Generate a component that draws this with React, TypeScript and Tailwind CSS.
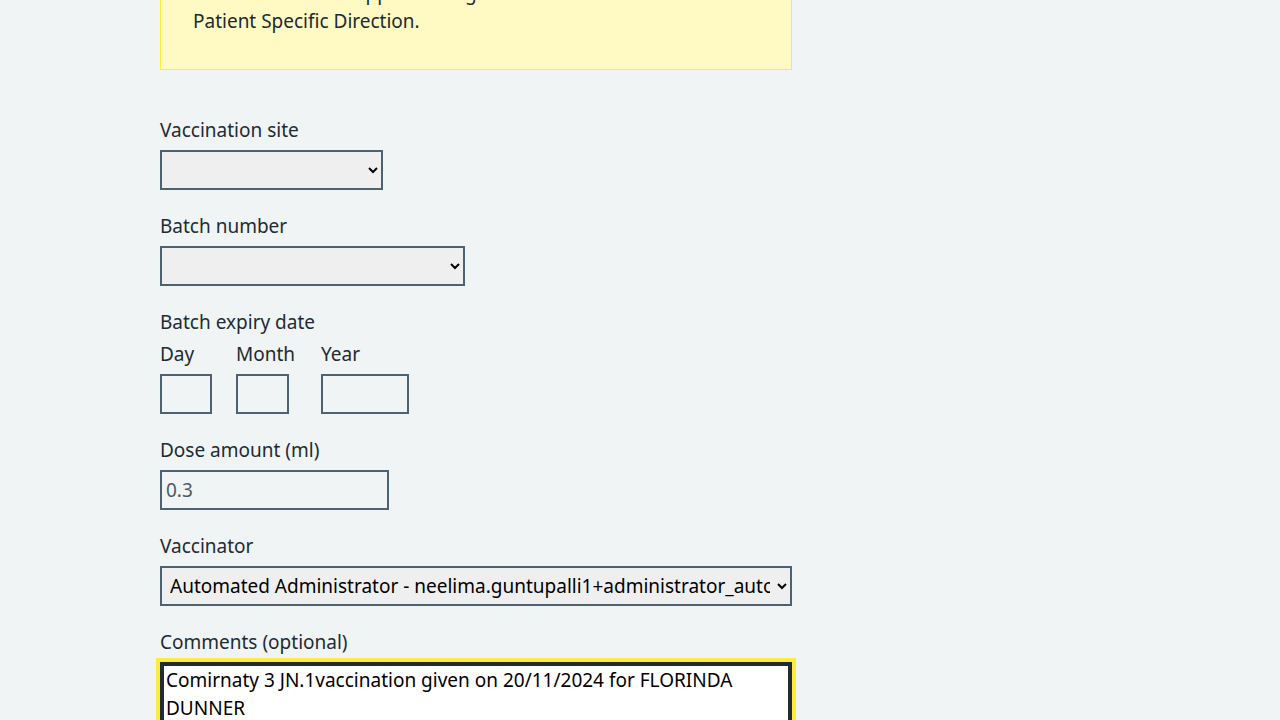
import { useState } from "react";

const font = { fontFamily: '"Noto Sans", "Open Sans", Arial, sans-serif' };

function Label({ children, htmlFor }: { children: React.ReactNode; htmlFor?: string }) {
  return (
    <label htmlFor={htmlFor} className="mb-[6px] block text-[19px] leading-[28px] text-[#212b32]">
      {children}
    </label>
  );
}

function DateField({ id, label, width, col }: { id: string; label: string; width: string; col?: string }) {
  return (
    <div className={`flex flex-col ${col ?? ""}`}>
      <label htmlFor={id} className="mb-[6px] block text-[19px] leading-[28px] text-[#212b32]">
        {label}
      </label>
      <input
        id={id}
        type="text"
        inputMode="numeric"
        className={`h-10 border-2 border-[#4c6272] bg-transparent px-1 text-[19px] outline-none ${width}`}
      />
    </div>
  );
}

export default function App() {
  const [comment, setComment] = useState(
    "Comirnaty 3 JN.1vaccination given on 20/11/2024 for FLORINDA DUNNER"
  );

  return (
    <div className="h-[720px] overflow-hidden bg-[#f0f4f5]" style={font}>
      <div className="ml-[160px] -mt-[28px] w-[632px]">
        <div className="border border-[#ffeb3b] bg-[#fff9c4] pb-[34px] pl-8 pr-8 pt-[6px]">
          <p className="text-[19px] leading-[28px] text-[#212b32]">
            This vaccine was supplied and given under the terms of a
            <br />
            Patient Specific Direction.
          </p>
        </div>

        <div className="mt-[46px] flex flex-col gap-[22px]">
          <div>
            <Label htmlFor="site">Vaccination site</Label>
            <select
              id="site"
              className="h-10 w-[223px] border-2 border-[#4c6272] bg-[#efefef] px-1 text-[19px] text-black"
            >
              <option value=""></option>
            </select>
          </div>

          <div>
            <Label htmlFor="batch">Batch number</Label>
            <select
              id="batch"
              className="h-10 w-[305px] border-2 border-[#4c6272] bg-[#efefef] px-1 text-[19px] text-black"
            >
              <option value=""></option>
            </select>
          </div>

          <fieldset>
            <legend className="mb-0 block text-[19px] leading-[28px] text-[#212b32]">Batch expiry date</legend>
            <div className="mt-[4px] flex gap-6">
              <DateField id="day" label="Day" width="w-[52px]" />
              <DateField id="month" label="Month" width="w-[53px]" col="w-[61px]" />
              <DateField id="year" label="Year" width="w-[88px]" />
            </div>
          </fieldset>

          <div>
            <Label htmlFor="dose">Dose amount (ml)</Label>
            <input
              id="dose"
              type="text"
              placeholder="0.3"
              className="h-10 w-[229px] border-2 border-[#4c6272] bg-transparent px-1 text-[19px] text-[#212b32] outline-none placeholder:text-[#505a5f]"
            />
          </div>

          <div>
            <Label htmlFor="vaccinator">Vaccinator</Label>
            <select
              id="vaccinator"
              defaultValue="auto"
              className="h-10 w-full border-2 border-[#4c6272] bg-[#efefef] px-1 text-[19px] text-black"
            >
              <option value="auto">
                Automated Administrator - neelima.guntupalli1+administrator_automation@nhs.net
              </option>
            </select>
          </div>

          <div>
            <Label htmlFor="comments">Comments (optional)</Label>
            <textarea
              id="comments"
              rows={3}
              value={comment}
              onChange={(e) => setComment(e.target.value)}
              className="block w-full resize-none border-2 border-[#212b32] bg-white px-1 pb-0 pt-[2px] text-[19px] leading-[28px] text-black shadow-[inset_0_0_0_2px_#212b32] outline-4 outline-offset-0 outline-[#ffeb3b] outline-solid"
            />
          </div>
        </div>
      </div>
    </div>
  );
}
